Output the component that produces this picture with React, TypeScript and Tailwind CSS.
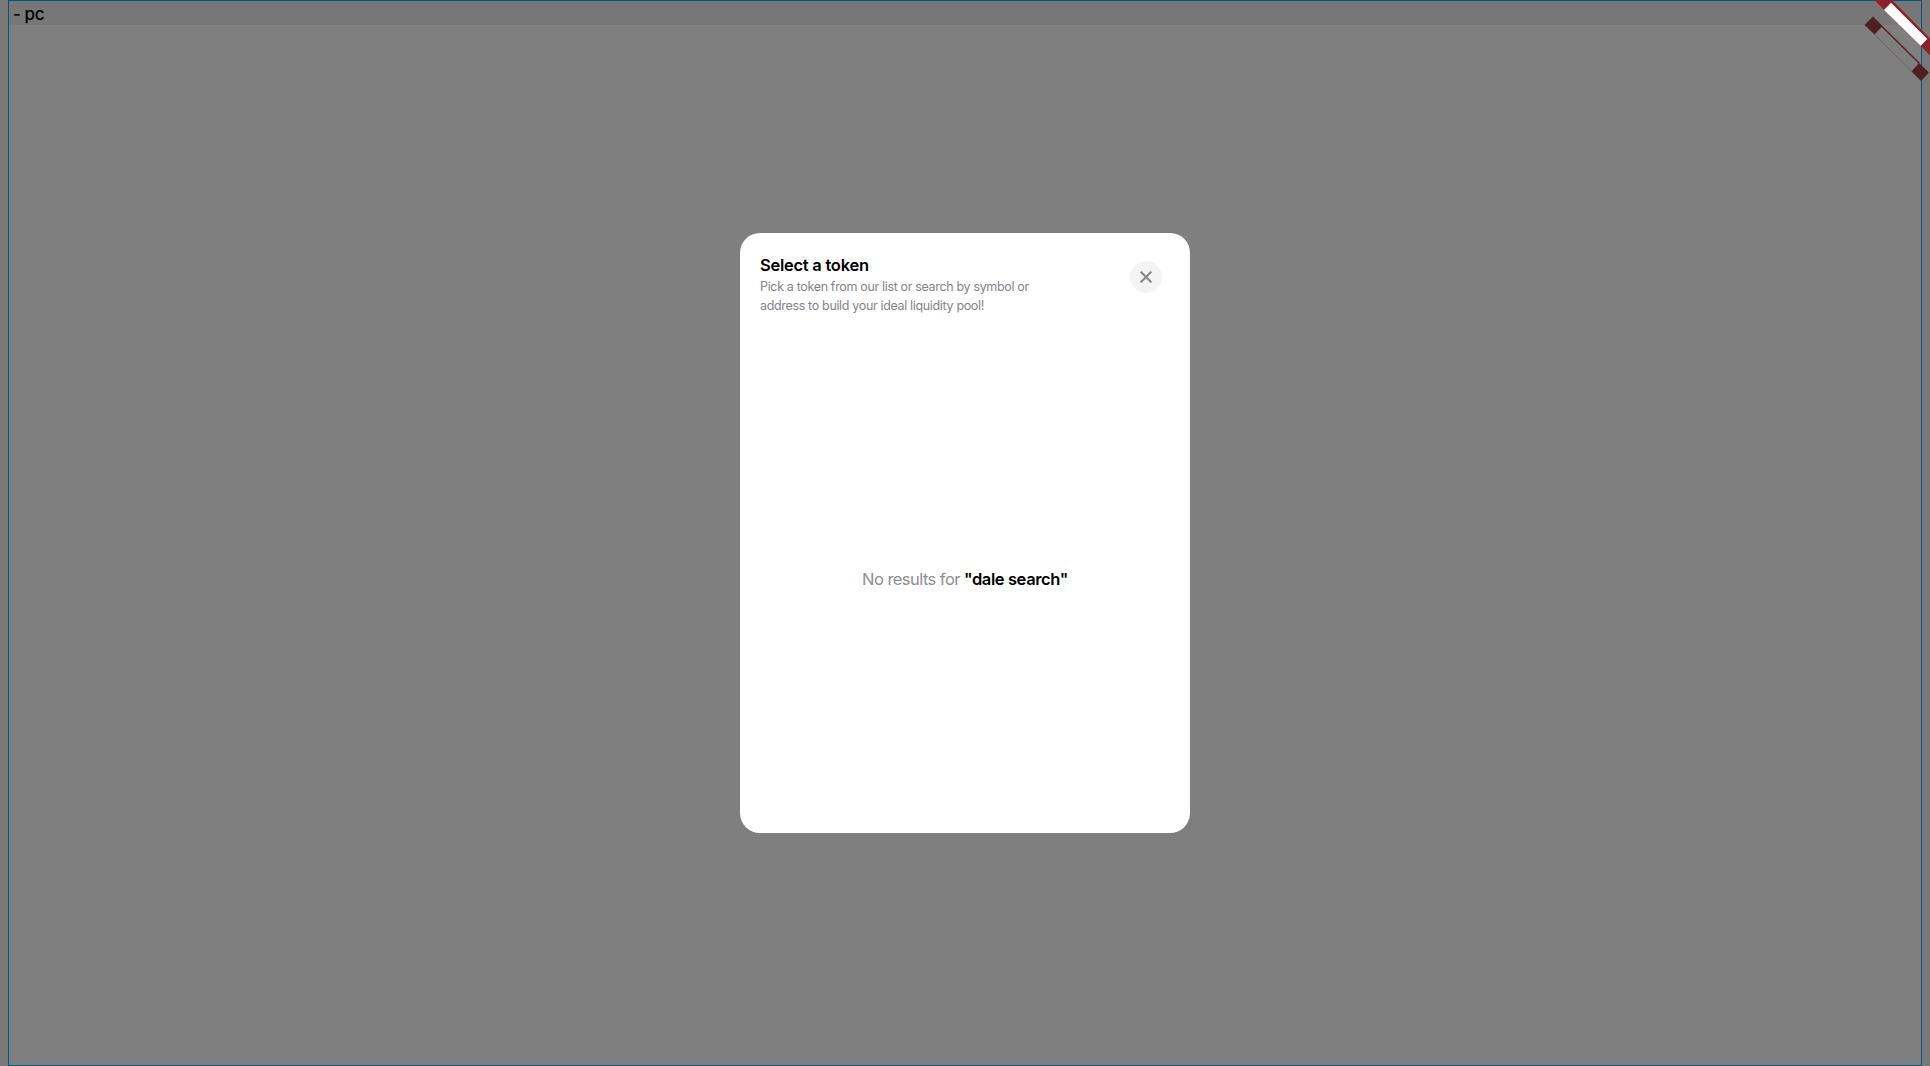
function DebugBanner() {
  return (
    <svg className="absolute right-0 top-0 h-[100px] w-[100px]" viewBox="0 0 100 100" aria-hidden="true">
      <path d="M44.5 0H62L100 38.5V55.5L90.7 45.7L54 10Z" fill="#8b2227" />
      <path d="M61 2.7L97.3 39L90.7 45.7L54 10Z" fill="#fff" />
      <path d="M68 10L61 17M75.5 17.5L68.5 24.5M83 25L76 32M90 32L83 39" stroke="#f3e6e6" strokeWidth="0.6" />
      <path d="M43 16.5L52.5 26L44.5 34.5L34.5 25Z" fill="#4f1f21" />
      <path d="M89 63L99 72.5L91 81L81.5 71.5Z" fill="#4f1f21" />
      <path d="M52 26.5L89.5 63.5" stroke="#5e2022" strokeWidth="1.5" />
      <path d="M44.5 34.5L82 71.5" stroke="#6d5858" strokeWidth="0.8" />
      <path d="M59 35L52 42M66.5 42L59.5 49M74 49.5L67 56.5M81 56.5L74 63.5" stroke="#766f6f" strokeWidth="0.6" />
    </svg>
  );
}

export default function App() {
  return (
    <div className="relative flex h-[1066px] w-[1930px] overflow-hidden bg-[#787878] px-2 font-['Inter',sans-serif] antialiased">
      <main className="flex grow flex-col border border-[#005680] bg-[#7f7f7f]">
        <header className="flex h-6 items-center bg-[#777777] px-1 pt-[3px] text-[17px] font-medium leading-[21px] tracking-[-0.4px] text-black">
          - pc
        </header>
      </main>
      <div className="absolute inset-0 flex items-center justify-center">
        <section role="dialog" className="flex h-[600px] w-[450px] flex-col rounded-[20px] bg-white px-5 pt-[22px]">
          <div className="flex items-start justify-between pr-2">
            <div>
              <h1 className="text-[16.5px] font-semibold leading-5 tracking-[-0.26px] text-black">Select a token</h1>
              <p className="mt-0.5 text-[12.5px] leading-[19px] tracking-[-0.34px] text-[#858589]">
                Pick a token from our list or search by symbol or
                <br />
                address to build your ideal liquidity pool!
              </p>
            </div>
            <button aria-label="Close" className="mt-[6px] grid size-8 place-items-center rounded-full bg-[#f4f4f4]">
              <svg className="size-3" viewBox="0 0 12 12" fill="none" stroke="#88888a" strokeWidth="2.1">
                <path d="M.6.6 11.4 11.4M11.4.6.6 11.4" />
              </svg>
            </button>
          </div>
          <p className="mt-[252px] text-center text-[16.5px] leading-6 tracking-[-0.55px] text-[#8e8e93]">
            No results for <span className="font-semibold tracking-[-0.4px] text-black">"dale search"</span>
          </p>
        </section>
      </div>
      <DebugBanner />
    </div>
  );
}
